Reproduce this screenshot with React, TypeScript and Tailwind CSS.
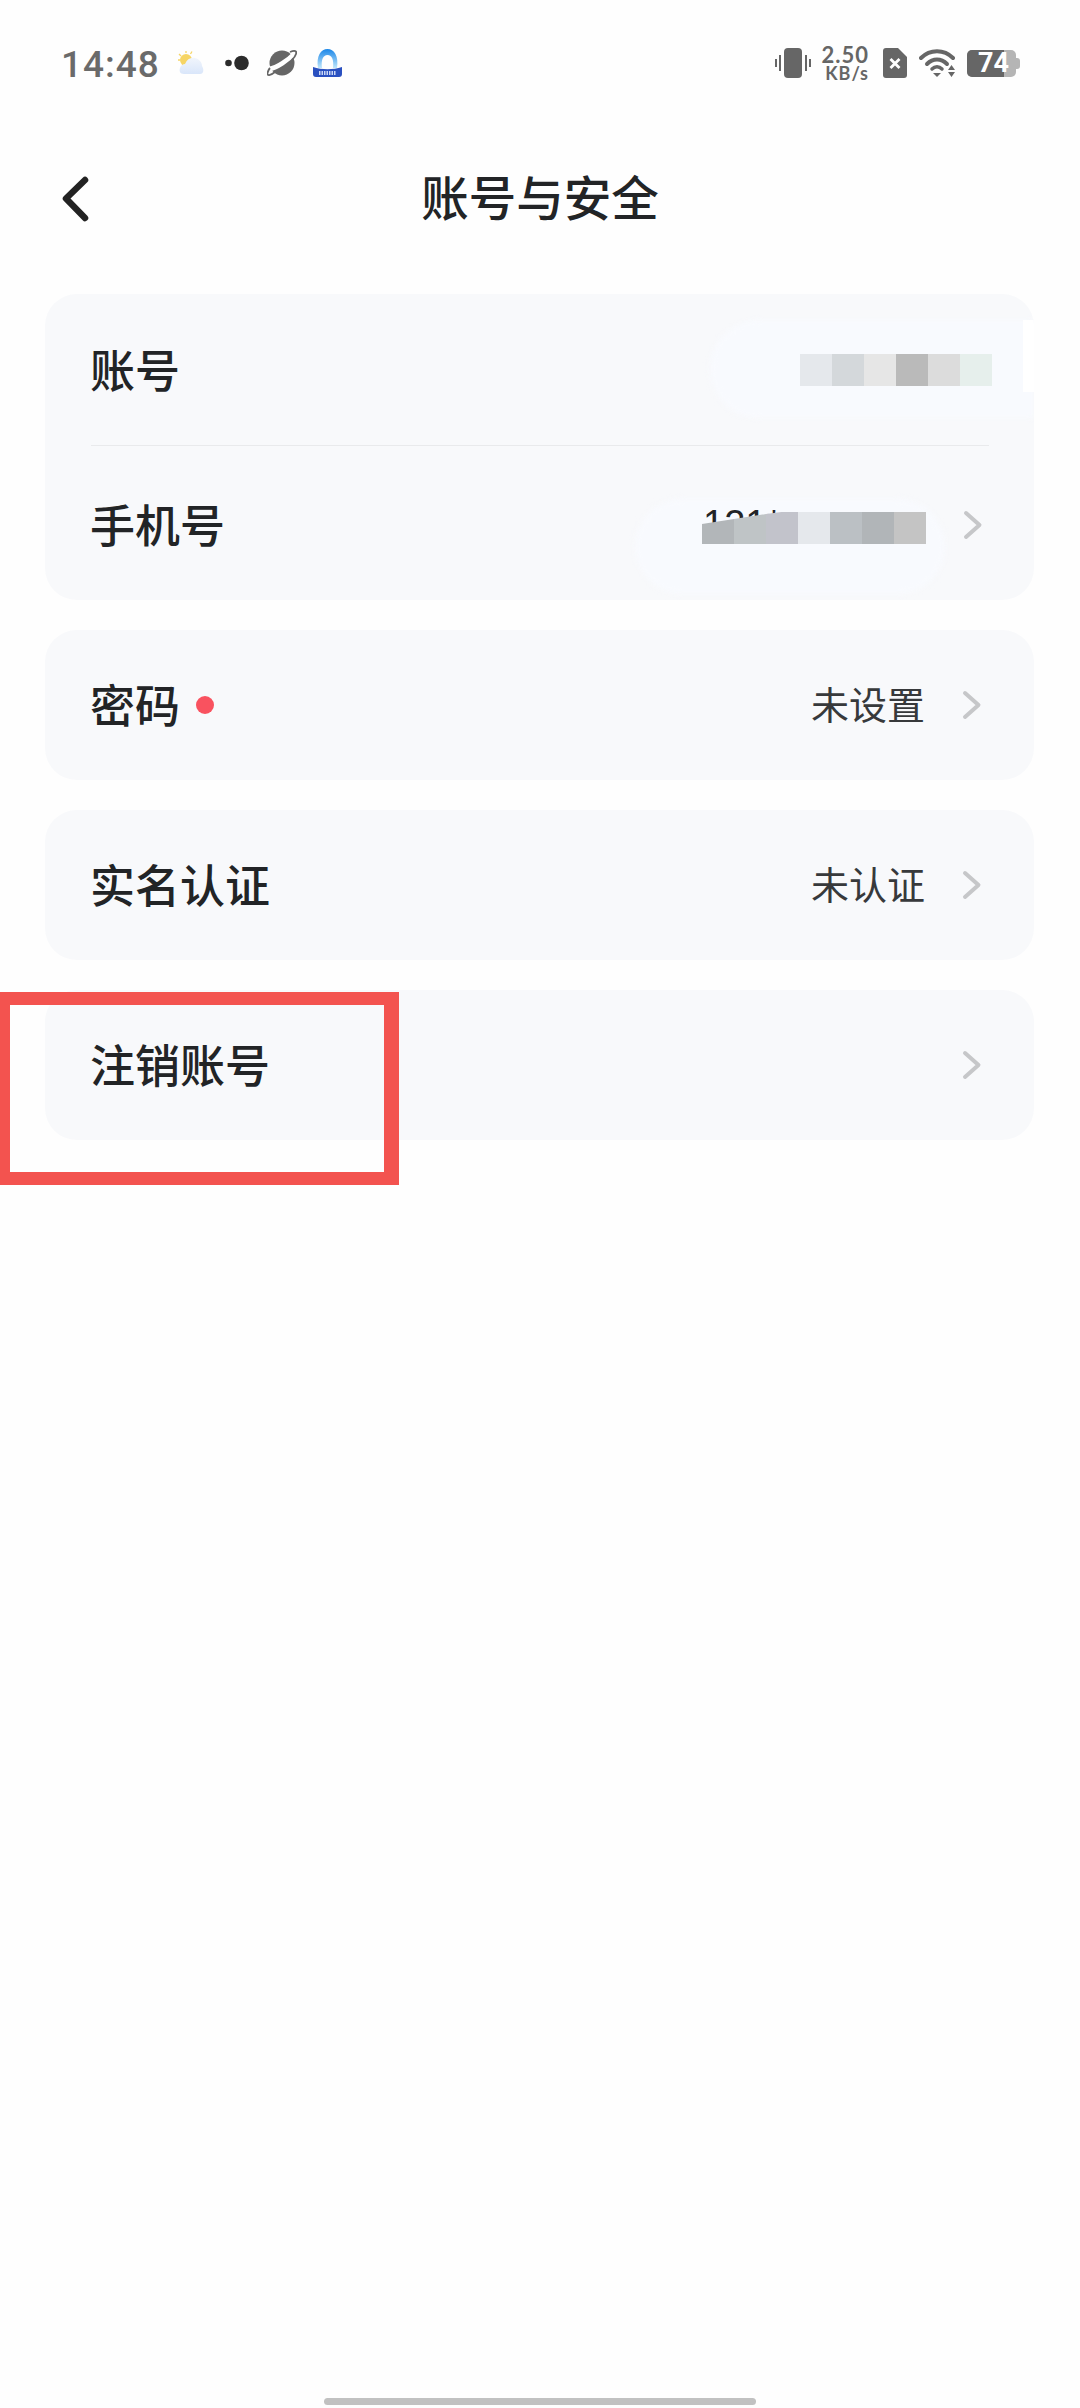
const cjk = "font-['Noto_Sans_CJK_SC','Noto_Sans',sans-serif]"

function Chevron() {
  return (
    <svg width="20" height="30" viewBox="0 0 20 30" fill="none" className="shrink-0">
      <path d="M3 3 L16.500 15 L3 27" stroke="#c6c7c9" strokeWidth="4" strokeLinecap="round" strokeLinejoin="round" />
    </svg>
  )
}

function Row({ label, value, dot }: { label: string; value?: string; dot?: boolean }) {
  return (
    <div className="h-[150px] flex items-center justify-between rounded-[32px] bg-[#f8f9fb] pl-[45px] pr-[52px]">
      <div className="flex items-center">
        <span className="text-[45px] leading-none font-medium text-[#222426] -translate-y-[2px]">{label}</span>
        {dot && <span className="ml-[16px] w-[18px] h-[18px] rounded-full bg-[#f9525f]" />}
      </div>
      <div className="flex items-center gap-[37px]">
        {value && <span className="text-[38px] leading-none text-[#37393b] -translate-y-[2px]">{value}</span>}
        <Chevron />
      </div>
    </div>
  )
}

function StatusLeft() {
  return (
    <div className="flex items-center">
      <span className="w-[96px] -ml-[1px] mr-[1px] font-['Roboto',sans-serif] font-medium text-[37px] leading-none tracking-[1px] text-[#6a6a6a] translate-y-[1px]">14:48</span>
      {/* weather */}
      <svg width="27" height="24" viewBox="0 0 27 24" className="ml-[20px]">
        <defs>
          <linearGradient id="cloud" x1="0" y1="0" x2="0" y2="1">
            <stop offset="0" stopColor="#f1f5fc" />
            <stop offset="1" stopColor="#d9e6fa" />
          </linearGradient>
        </defs>
        <circle cx="8" cy="9" r="6" fill="#f6d565" />
        <path d="M1 3 L3 5 M8 0 L8 2 M14 0.500 L12.500 3 M0 9 L2 9" stroke="#f6d565" strokeWidth="1.300" />
        <path d="M6 23 C2 23 1 20 2 17 C3 14 5 13 7 13 C9 8 13 6 17 7 C21 8 24 11 24 15 C26 18 26 23 22 23 Z" fill="url(#cloud)" />
      </svg>
      {/* dots */}
      <svg width="24" height="16" viewBox="0 0 24 16" className="ml-[20px]">
        <circle cx="3.500" cy="8" r="3.300" fill="#2b2b2b" />
        <circle cx="16.500" cy="8" r="7.300" fill="#2b2b2b" />
      </svg>
      {/* planet */}
      <svg width="30" height="28" viewBox="0 0 30 28" className="ml-[18px]">
        <circle cx="15" cy="14" r="12.500" fill="#666666" />
        <path d="M2 20 C10 19 21 11 28 4" stroke="#ffffff" strokeWidth="4.500" fill="none" />
        <path d="M23 3 C28 1 30 2 29 5 C28 8 26 10 25 11 M8 23 C3 27 0 27 0.500 24 C1 22 2 20 3 19" stroke="#666666" strokeWidth="1.800" fill="none" />
      </svg>
      {/* blue badge */}
      <svg width="31" height="30" viewBox="0 0 31 30" className="ml-[15px]">
        <defs>
          <linearGradient id="arch" x1="0" y1="0" x2="0" y2="1">
            <stop offset="0" stopColor="#1a86e8" />
            <stop offset="1" stopColor="#bfe6fb" />
          </linearGradient>
        </defs>
        <path d="M6 20 C4 8 9 1 15.500 1 C22 1 27 8 25 20 L21 20 C22 12 20 7 15.500 7 C11 7 9 12 10 20 Z" fill="url(#arch)" />
        <path d="M1 19 C10 22 21 22 30 19 L30 26 C30 28 29 29 27 29 L4 29 C2 29 1 28 1 26 Z" fill="#2a50c0" />
        <path d="M7 25 L24 25" stroke="#c9d6f6" strokeWidth="4" strokeDasharray="1.500 1" />
      </svg>
    </div>
  )
}

function StatusRight() {
  return (
    <div className="flex items-center">
      <svg width="36" height="30" viewBox="0 0 36 30">
        <rect x="9" y="0" width="18" height="30" rx="4" fill="#666666" />
        <path d="M1 11 L1 19 M5 7 L5 23 M31 7 L31 23 M35 11 L35 19" stroke="#666666" strokeWidth="2" />
      </svg>
      <div className="ml-[12px] w-[46px] flex flex-col items-end font-['Lato',sans-serif] font-bold text-[#666666]">
        <span className="text-[22px] leading-[20px] tracking-[1px]">2.50</span>
        <span className="text-[18px] leading-[16px] tracking-[1px]">KB/s</span>
      </div>
      <svg width="24" height="30" viewBox="0 0 24 30" className="ml-[14px]">
        <path d="M3 0 L15 0 L24 9 L24 27 C24 29 23 30 21 30 L3 30 C1 30 0 29 0 27 L0 3 C0 1 1 0 3 0 Z" fill="#666666" />
        <path d="M7.500 11 L16.500 20 M16.500 11 L7.500 20" stroke="#ffffff" strokeWidth="2.800" />
      </svg>
      <svg width="37" height="28" viewBox="0 0 37 28" className="ml-[12px]">
        <path d="M2 9 C11 0 25 0 34 9" stroke="#666666" strokeWidth="4" fill="none" strokeLinecap="round" />
        <path d="M8 15 C14 9 22 9 28 15" stroke="#666666" strokeWidth="4" fill="none" strokeLinecap="round" />
        <path d="M13 20 C16 17 20 17 23 20" stroke="#666666" strokeWidth="3.500" fill="none" strokeLinecap="round" />
        <path d="M14 24 L22 24 L18 28 Z" fill="#666666" />
        <path d="M29 21 L36 21 L32.500 16 Z M29 23 L36 23 L32.500 28 Z" fill="#666666" />
      </svg>
      <div className="ml-[11px] relative w-[53px] h-[27px] flex items-center">
        <div className="w-[49px] h-[27px] rounded-[5px] bg-[#b5b5b5] overflow-hidden">
          <div className="w-[37px] h-full bg-[#666666]" />
        </div>
        <div className="w-[4px] h-[11px] rounded-r-[3px] bg-[#b5b5b5]" />
        <span className="absolute left-[11px] top-0 font-['Roboto',sans-serif] font-bold text-[27px] leading-[27px] text-white">74</span>
      </div>
    </div>
  )
}

function Mosaic({ colors, clips }: { colors: string[]; clips?: string[] }) {
  return (
    <div className="flex">
      {colors.map((c, i) => (
        <div key={i} className="w-[32px] h-[32px]" style={{ backgroundColor: c, clipPath: clips?.[i] }} />
      ))}
    </div>
  )
}

export default function App() {
  return (
    <div className={`relative w-[1080px] h-[2408px] overflow-hidden bg-[#fefefe] flex flex-col ${cjk}`}>
      <div className="h-[126px] shrink-0 flex items-center justify-between pl-[62px] pr-[60px]">
        <StatusLeft />
        <StatusRight />
      </div>

      <header className="h-[146px] shrink-0 grid grid-cols-[1fr_auto_1fr] items-center">
        <div className="pl-[62px]">
          <svg width="28" height="46" viewBox="0 0 28 46" fill="none" className="block">
            <path d="M23 4 L4 22.500 L23 42" stroke="#222222" strokeWidth="6.500" strokeLinecap="round" strokeLinejoin="round" />
          </svg>
        </div>
        <h1 className="pb-[7px] text-[47.5px] leading-none font-medium text-[#222426]">账号与安全</h1>
        <div />
      </header>

      <main className="mt-[22px] pl-[45px] pr-[46px] flex flex-col gap-[30px]">
        {/* account + phone */}
        <section className="relative h-[306px] rounded-[32px] bg-[#f8f9fb] overflow-hidden">
          <div className="absolute left-[665px] top-[26px] w-[324px] h-[98px] rounded-l-[50px] bg-[#f8fafe] blur-[3px]" />
          <div className="absolute right-0 top-[26px] w-[11px] h-[72px] bg-white" />
          <div className="absolute left-[590px] top-[205px] w-[310px] h-[95px] rounded-[50px] bg-[#f8fafe] blur-[3px]" />
          <div className="relative h-[151px] flex items-center justify-between pl-[45px] pr-[42px]">
            <span className="text-[45px] leading-none font-medium text-[#222426] -translate-y-[1px]">账号</span>
            <Mosaic colors={['#e5e8ec', '#d4d8db', '#e6e6e6', '#bababa', '#dcdcdc', '#e6efec']} />
          </div>
          <div className="relative ml-[46px] mr-[45px] h-[1px] bg-[#e9eaec]" />
          <div className="relative h-[154px] pt-[4px] flex items-center justify-between pl-[45px] pr-[51px]">
            <span className="text-[45px] leading-none font-medium text-[#222426] -translate-y-[2px]">手机号</span>
            <div className="flex items-center gap-[37px]">
              <div className="relative h-[32px] mt-[6px]">
                <span className="absolute left-[1px] -top-[7px] font-['Liberation_Sans',sans-serif] text-[38px] leading-none text-[#222426]">121*</span>
                <div className="relative">
                  <Mosaic
                    colors={['#b2b6b9', '#bfc4c6', '#c2c3cb', '#e5e8ec', '#bbc0c4', '#b1b5b8', '#c4c4c4']}
                    clips={[
                      'polygon(0 12px, 100% 7px, 100% 100%, 0 100%)',
                      'polygon(0 7px, 100% 2px, 100% 100%, 0 100%)',
                      'polygon(0 2px, 48% 0, 100% 0, 100% 100%, 0 100%)',
                    ]}
                  />
                </div>
              </div>
              <Chevron />
            </div>
          </div>
        </section>

        <Row label="密码" value="未设置" dot />
        <Row label="实名认证" value="未认证" />
        <Row label="注销账号" />
      </main>

      {/* red annotation box over the last row */}
      <div className="absolute left-0 top-[992px] w-[399px] h-[193px] border-y-[13px] border-l-[10px] border-r-[15px] border-[#f3534f]" />

      <div className="mt-auto mb-[3px] mx-auto w-[432px] h-[7px] rounded-full bg-[#c1c1c1]" />
    </div>
  )
}
